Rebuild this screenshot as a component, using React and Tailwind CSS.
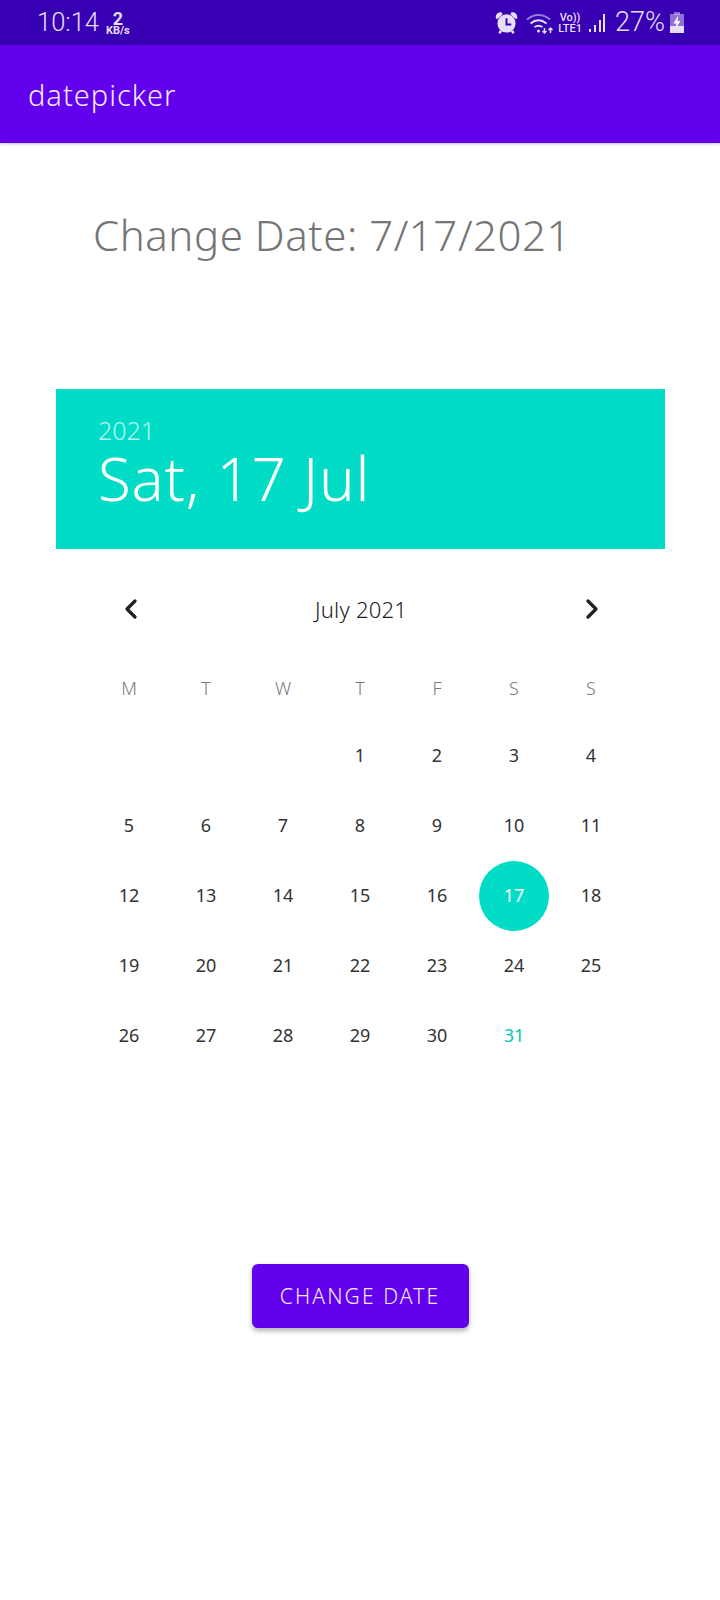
import { ChevronLeft, ChevronRight } from "lucide-react";

const weekDays = ["M", "T", "W", "T", "F", "S", "S"];
const days = [null, null, null];
for (let i = 1; i <= 31; i++) days.push(i);

const StatusIcons = () => (
  <div className="flex items-center text-[#e9defa]">
    {/* alarm */}
    <svg width="23" height="23" viewBox="0 0 24 24" className="mr-[8px]" fill="currentColor">
      <circle cx="12" cy="13" r="9.500" />
      <path d="M1 8 C0 4 3 0.500 7 1.500 L8 3.500 3 8z M23 8 C24 4 21 0.500 17 1.500 L16 3.500 21 8z" />
      <path d="M11 7.500h2v5.500h4v2h-6z" fill="#3700b3" />
      <path d="M5 20l2.500 1.500-2 2.500-2-1.500zM19 20l-2.500 1.500 2 2.500 2-1.500z" />
    </svg>
    {/* wifi */}
    <svg width="28" height="24" viewBox="0 0 28 24" fill="none" stroke="currentColor" strokeWidth="2">
      <path d="M1 8.500C8 2.500 17 2.500 24 8.500" opacity="0.55" />
      <path d="M4.500 12.500c5-4 11-4 16 0" />
      <path d="M8.500 16c3-2 5-2 8 0" />
      <circle cx="12.500" cy="20" r="1.500" fill="currentColor" stroke="none" />
      <path d="M18.500 17v5M16.500 20l2 2 2-2" strokeWidth="1.500" />
      <path d="M24.500 22v-5M22.500 19l2-2 2 2" strokeWidth="1.500" />
    </svg>
    <div className="ml-[3px] flex w-[26px] flex-col items-center font-['Roboto',sans-serif] text-[11px] leading-[11px] font-medium">
      <span>Vo))</span>
      <span>LTE1</span>
    </div>
    {/* signal */}
    <svg width="18" height="22" viewBox="0 0 18 22" className="ml-[5px]" fill="currentColor">
      <rect x="1" y="17" width="2" height="3" />
      <rect x="6" y="13" width="2" height="7" />
      <rect x="11" y="8" width="2" height="12" />
      <rect x="15" y="2" width="2" height="18" />
    </svg>
    <span className="ml-[9px] font-['Roboto',sans-serif] text-[27px] leading-none font-light">27%</span>
    {/* battery */}
    <svg width="14" height="22" viewBox="0 0 14 22" className="ml-[5px]" fill="currentColor">
      <rect x="4" y="0" width="6" height="3" opacity="0.5" />
      <rect x="0" y="2" width="14" height="12" opacity="0.5" />
      <rect x="0" y="14" width="14" height="7" />
      <path d="M8 3.500 3.500 11.500H6.500L5.500 17 10.500 9H7.500z" fill="#fff" />
    </svg>
  </div>
);

const App = () => {
  return (
    <div className="flex h-[1600px] w-[720px] flex-col overflow-hidden bg-white font-['Noto_Sans',sans-serif]">
      <div className="flex h-[45px] items-center justify-between bg-[#3700b3] pr-[36px] pl-[37px]">
        <div className="flex items-center text-[#e9defa]">
          <span className="font-['Roboto',sans-serif] text-[25.5px] leading-none font-light">10:14</span>
          <div className="mt-[3px] ml-[7px] flex flex-col items-center font-['Roboto',sans-serif] font-bold">
            <span className="text-[18px] leading-[14px]">2</span>
            <span className="text-[11px] leading-[10px]">KB/s</span>
          </div>
        </div>
        <StatusIcons />
      </div>

      <div className="flex h-[98px] items-center bg-[#6200ee] pl-[28px] shadow-[0_1px_3px_rgba(0,0,0,0.25)]">
        <span className="text-[29px] leading-none font-light tracking-[1px] text-[#f3ecfd]">datepicker</span>
      </div>

      <div className="mt-[61px] pl-[93px] text-[42px] leading-[62px] font-light tracking-[0.55px] text-[#757575]">
        Change Date: 7/17/2021
      </div>

      <div className="mt-[123px] ml-[56px] w-[609px]">
        <div className="flex h-[160px] flex-col bg-[#00dcc6] pt-[25px] pl-[42px] text-white">
          <span className="text-[25px] leading-[33px] font-light text-[#b3f5ee]">2021</span>
          <span className="text-[60px] leading-[62px] font-light tracking-[0.8px]">Sat, 17 Jul</span>
        </div>

        <div className="pr-[35.5px] pl-[34.5px]">
          <div className="mt-[42px] flex h-[36px] items-center justify-between pr-[22px] pl-[24px]">
            <ChevronLeft size={32} strokeWidth={2.5} className="text-[#212121]" />
            <span className="text-[22px] font-light tracking-[0.2px] text-[#212121]">July 2021</span>
            <ChevronRight size={32} strokeWidth={2.5} className="text-[#212121]" />
          </div>

          <div className="mt-[43px] grid grid-cols-7">
            {weekDays.map((d, i) => (
              <div key={i} className="flex h-[36px] items-center justify-center text-[18px] font-light text-[#7a7a7a]">
                {d}
              </div>
            ))}
          </div>

          <div className="mt-[14.5px] grid grid-cols-7">
            {days.map((d, i) => (
              <div key={i} className="flex h-[70px] items-center justify-center text-[18px] text-[#333333]">
                {d === 17 ? (
                  <span className="flex h-[70px] w-[70px] items-center justify-center rounded-full bg-[#00dcc6] text-white">
                    {d}
                  </span>
                ) : d === 31 ? (
                  <span className="text-[#00c9b5]">{d}</span>
                ) : (
                  d
                )}
              </div>
            ))}
          </div>
        </div>
      </div>

      <div className="mt-[193.5px] flex justify-center">
        <button className="h-[64px] w-[217px] rounded-[6px] bg-[#6200ee] pt-[1px] text-[21px] font-light tracking-[2.1px] text-[#f3ecfd] shadow-[0_3px_5px_rgba(0,0,0,0.3)]">
          CHANGE DATE
        </button>
      </div>
    </div>
  );
};

export default App;
